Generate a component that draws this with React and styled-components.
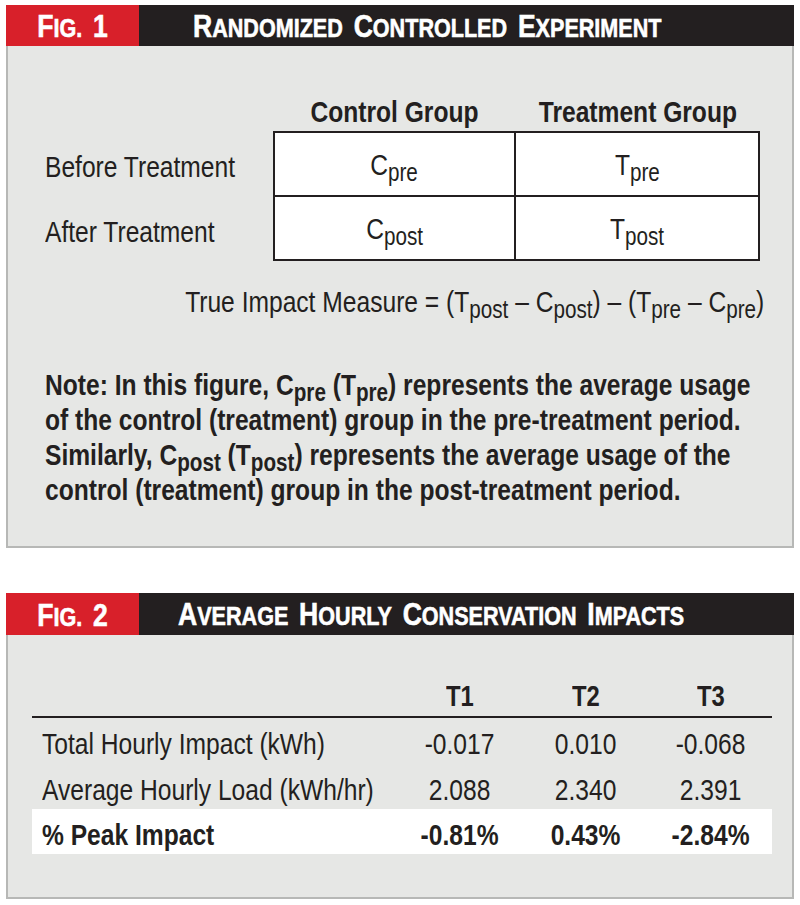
import React from 'react';
import styled, { createGlobalStyle } from 'styled-components';

const FONT = `"Liberation Sans", Arial, sans-serif`;
const INK = '#231f20';

const Global = createGlobalStyle`
  html, body { margin: 0; padding: 0; background: #fff; }
  body { font-family: ${FONT}; color: ${INK}; }
`;

const Page = styled.main`
  display: flex;
  flex-direction: column;
  gap: 45px;
  padding: 5px 6px 0 6px;
  width: 788px;
  overflow: hidden;
`;

/* condensed type: the reference uses a condensed grotesque */
const Narrow = styled.span`
  display: inline-block;
  white-space: nowrap;
  transform: scaleX(${p => p.$scale || 0.82});
  transform-origin: ${p => p.$origin || 'left'} center;
`;

const Figure = styled.section`
  display: flex;
  flex-direction: column;
`;

const Header = styled.header`
  display: grid;
  grid-template-columns: 133px 1fr;
  height: ${p => p.$h}px;
`;

const Tag = styled.div`
  background: #d8202a;
  color: #fff;
  display: flex;
  align-items: center;
  justify-content: center;
  font-weight: 700;
  padding-top: 1px;
  -webkit-text-stroke: 0.6px #fff;
`;

const Title = styled.h2`
  margin: 0;
  background: ${INK};
  color: #fff;
  display: flex;
  align-items: center;
  padding: 1px 0 0 ${p => p.$indent}px;
  font-weight: 700;
  overflow: hidden;
  -webkit-text-stroke: 0.6px #fff;
`;

const Word = styled.span`
  margin-right: ${p => (p.$last ? 0 : 13)}px;
  text-transform: uppercase;
  line-height: 1;
`;

const Big = styled.span`
  font-size: 32px;
`;

const Small = styled.span`
  font-size: 26px;
`;

function SmallCaps({ text, origin }) {
  const words = text.split(' ');
  return (
    <Narrow $scale={0.83} $origin={origin}>
      {words.map((w, i) => (
        <Word key={i} $last={i === words.length - 1}>
          <Big>{w[0]}</Big>
          {w.length > 1 && <Small>{w.slice(1)}</Small>}
        </Word>
      ))}
    </Narrow>
  );
}

const Body = styled.div`
  background: #e6e7e5;
  border: 2px solid #b7b8b6;
  border-top: 0;
  height: ${p => p.$h}px;
  box-sizing: border-box;
  overflow: hidden;
`;

/* ---------- Fig 1 ---------- */

const Experiment = styled.div`
  display: grid;
  grid-template-columns: 265px 243px 244px;
  grid-template-rows: 85px 66px 64px;
`;

const ColHead = styled.div`
  align-self: end;
  text-align: center;
  font-size: 30px;
  line-height: 30px;
  font-weight: 700;
  padding-bottom: 4px;
`;

const RowLabel = styled.div`
  display: flex;
  align-items: center;
  padding: 5px 0 0 37px;
  font-size: 30px;
  line-height: 30px;
`;

const Cell = styled.div`
  background: #fff;
  border: 2px solid ${INK};
  border-left-width: ${p => (p.$col === 0 ? 2 : 0)}px;
  border-top-width: ${p => (p.$row === 0 ? 2 : 0)}px;
  display: flex;
  align-items: center;
  justify-content: center;
  padding-top: 2px;
  font-size: 30px;
  line-height: 30px;
`;

const Sub = styled.sub`
  font-size: 0.84em;
  vertical-align: -0.25em;
  line-height: 0;
`;

const Formula = styled.p`
  margin: 26px 0 0;
  padding-right: 28px;
  text-align: right;
  font-size: 30px;
  line-height: 30px;
`;

const Note = styled.p`
  margin: 50px 0 0;
  padding-left: 37px;
  font-size: 30px;
  line-height: 35px;
  font-weight: 700;
`;

/* ---------- Fig 2 ---------- */

const ImpactTable = styled.div`
  display: grid;
  grid-template-columns: 365px 126px 126px 123px;
  margin: 0 20px 0 24px;
`;

const THead = styled.div`
  height: 83px;
  border-bottom: 2px solid ${INK};
  display: flex;
  align-items: flex-end;
  justify-content: center;
  padding-bottom: 5px;
  box-sizing: border-box;
  font-size: 29px;
  line-height: 29px;
  font-weight: 700;
`;

const TCell = styled.div`
  height: ${p => p.$h}px;
  box-sizing: border-box;
  display: flex;
  align-items: center;
  justify-content: ${p => (p.$label ? 'flex-start' : 'center')};
  padding: 7px 0 0 ${p => (p.$label ? 10 : 0)}px;
  background: ${p => (p.$highlight ? '#fff' : 'transparent')};
  font-size: 30px;
  line-height: 30px;
  font-weight: ${p => (p.$highlight ? 700 : 400)};
`;

const matrix = [
  ['Before Treatment', ['C', 'pre'], ['T', 'pre']],
  ['After Treatment', ['C', 'post'], ['T', 'post']],
];

const impacts = [
  { label: 'Total Hourly Impact (kWh)', values: ['-0.017', '0.010', '-0.068'], h: 45 },
  { label: 'Average Hourly Load (kWh/hr)', values: ['2.088', '2.340', '2.391'], h: 46 },
  { label: '% Peak Impact', values: ['-0.81%', '0.43%', '-2.84%'], h: 45, highlight: true },
];

const V = ({ b, s }) => (
  <>
    {b}
    <Sub>{s}</Sub>
  </>
);

export default function App() {
  return (
    <>
      <Global />
      <Page>
        <Figure>
          <Header $h={41}>
            <Tag><SmallCaps text="Fig. 1" origin="center" /></Tag>
            <Title $indent={54}><SmallCaps text="Randomized Controlled Experiment" /></Title>
          </Header>
          <Body $h={502}>
            <Experiment>
              <div />
              <ColHead><Narrow $origin="center">Control Group</Narrow></ColHead>
              <ColHead><Narrow $origin="center">Treatment Group</Narrow></ColHead>
              {matrix.map(([label, c, t], r) => (
                <React.Fragment key={label}>
                  <RowLabel><Narrow>{label}</Narrow></RowLabel>
                  <Cell $row={r} $col={0}><Narrow $origin="center"><V b={c[0]} s={c[1]} /></Narrow></Cell>
                  <Cell $row={r} $col={1}><Narrow $origin="center"><V b={t[0]} s={t[1]} /></Narrow></Cell>
                </React.Fragment>
              ))}
            </Experiment>
            <Formula>
              <Narrow $origin="right">
                True Impact Measure = (<V b="T" s="post" /> – <V b="C" s="post" />) – (<V b="T" s="pre" /> – <V b="C" s="pre" />)
              </Narrow>
            </Formula>
            <Note>
              <Narrow>
                Note: In this figure, <V b="C" s="pre" /> (<V b="T" s="pre" />) represents the average usage
                <br />
                of the control (treatment) group in the pre-treatment period.
                <br />
                Similarly, <V b="C" s="post" /> (<V b="T" s="post" />) represents the average usage of the
                <br />
                control (treatment) group in the post-treatment period.
              </Narrow>
            </Note>
          </Body>
        </Figure>

        <Figure>
          <Header $h={42}>
            <Tag><SmallCaps text="Fig. 2" origin="center" /></Tag>
            <Title $indent={39}><SmallCaps text="Average Hourly Conservation Impacts" /></Title>
          </Header>
          <Body $h={264}>
            <ImpactTable>
              <THead />
              <THead><Narrow $origin="center">T1</Narrow></THead>
              <THead><Narrow $origin="center">T2</Narrow></THead>
              <THead><Narrow $origin="center">T3</Narrow></THead>
              {impacts.map(row => (
                <React.Fragment key={row.label}>
                  <TCell $label $h={row.h} $highlight={row.highlight}>
                    <Narrow>{row.label}</Narrow>
                  </TCell>
                  {row.values.map((v, i) => (
                    <TCell key={i} $h={row.h} $highlight={row.highlight}>
                      <Narrow $origin="center">{v}</Narrow>
                    </TCell>
                  ))}
                </React.Fragment>
              ))}
            </ImpactTable>
          </Body>
        </Figure>
      </Page>
    </>
  );
}
